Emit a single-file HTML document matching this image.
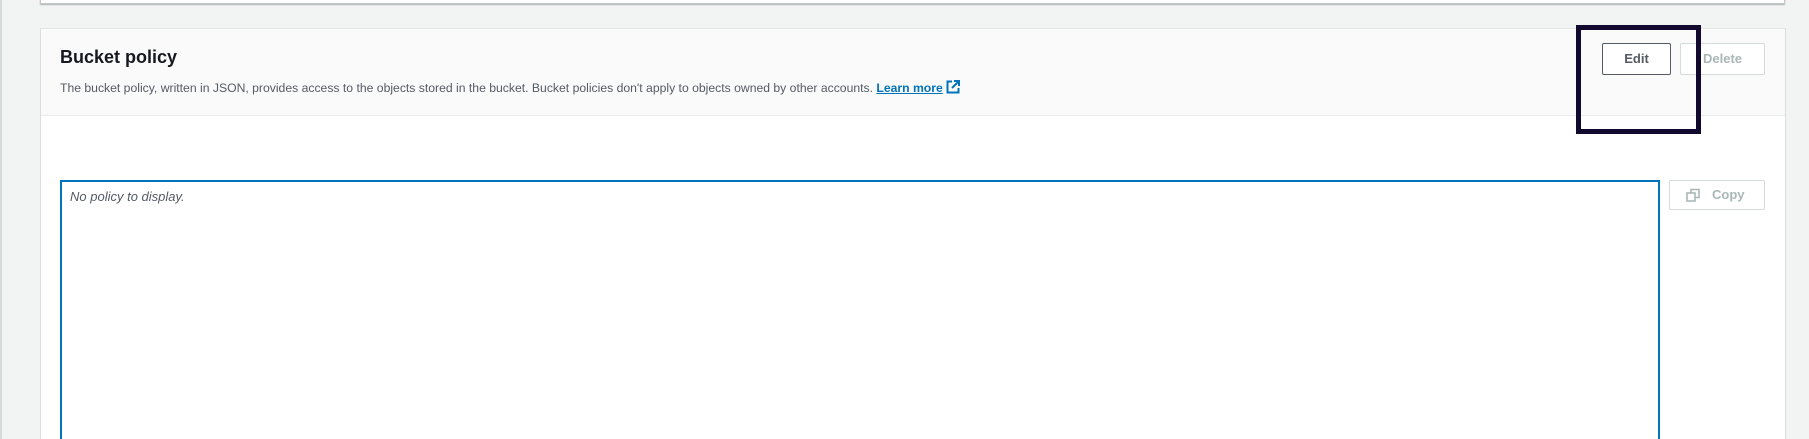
<!DOCTYPE html>
<html style="overflow:hidden;height:439px"><head><style>
body{margin:0;width:1809px;height:439px;background:#f2f3f3;position:relative;overflow:hidden;font-family:"Liberation Sans",sans-serif;}
.abs{position:absolute;box-sizing:border-box;}
</style></head><body>
<div class="abs" style="left:0;top:0;width:2px;height:439px;background:#d5dbdb"></div>
<div class="abs" style="left:40px;top:-10px;width:1745px;height:14px;background:#fff;border:1px solid #c6c6c6;box-shadow:0 1px 1px #aab7b8"></div>
<div class="abs" style="left:40px;top:28px;width:1746px;height:411px;background:#fff;border-left:1px solid #dcdcdc;border-right:1px solid #dcdcdc;border-top:1px solid #e4e4e4"></div>
<div class="abs" style="left:41px;top:29px;width:1744px;height:87px;background:#fafafa;border-bottom:1px solid #eaeded"></div>
<div class="abs" style="left:60px;top:47px;font-size:18px;font-weight:bold;color:#16191f">Bucket policy</div>
<div class="abs" style="left:60px;top:80px;font-size:12.2px;color:#545b64;white-space:nowrap">The bucket policy, written in JSON, provides access to the objects stored in the bucket. Bucket policies don't apply to objects owned by other accounts. <span style="color:#0073bb;text-decoration:underline;font-weight:bold">Learn more</span> <svg width="14" height="14" viewBox="0 0 14 14" style="vertical-align:-2px"><path d="M6 1.5H1.5v11h11V8" fill="none" stroke="#0073bb" stroke-width="2"/><path d="M8 1h5v5M13 1L6 8" fill="none" stroke="#0073bb" stroke-width="2"/></svg></div>
<div class="abs" style="left:1602px;top:43px;width:69px;height:32px;border:1px solid #545b64;border-radius:2px;background:#fff;font-size:13px;font-weight:bold;color:#545b64;text-align:center;line-height:30px">Edit</div>
<div class="abs" style="left:1680px;top:43px;width:85px;height:32px;border:1px solid #d5dbdb;border-radius:2px;background:#fff;font-size:13px;font-weight:bold;color:#aab7b8;text-align:center;line-height:30px">Delete</div>
<div class="abs" style="left:1576px;top:25px;width:125px;height:109px;border:5px solid #110a2e"></div>
<div class="abs" style="left:60px;top:180px;width:1600px;height:259px;border:2px solid #0073bb;border-bottom:none;background:#fff"></div>
<div class="abs" style="left:70px;top:189px;font-size:13px;font-style:italic;color:#545b64">No policy to display.</div>
<div class="abs" style="left:1669px;top:180px;width:96px;height:30px;border:1px solid #d5dbdb;border-radius:2px;background:#fff;font-size:13px;font-weight:bold;color:#aab7b8;line-height:28px;padding-left:42px"><svg class="abs" style="left:16px;top:7px" width="15" height="15" viewBox="0 0 15 15"><rect x="1" y="5" width="8" height="8" fill="none" stroke="#aab7b8" stroke-width="1.6"/><path d="M5 5V1.5h8v8H9" fill="none" stroke="#aab7b8" stroke-width="1.6"/></svg>Copy</div>
</body></html>
